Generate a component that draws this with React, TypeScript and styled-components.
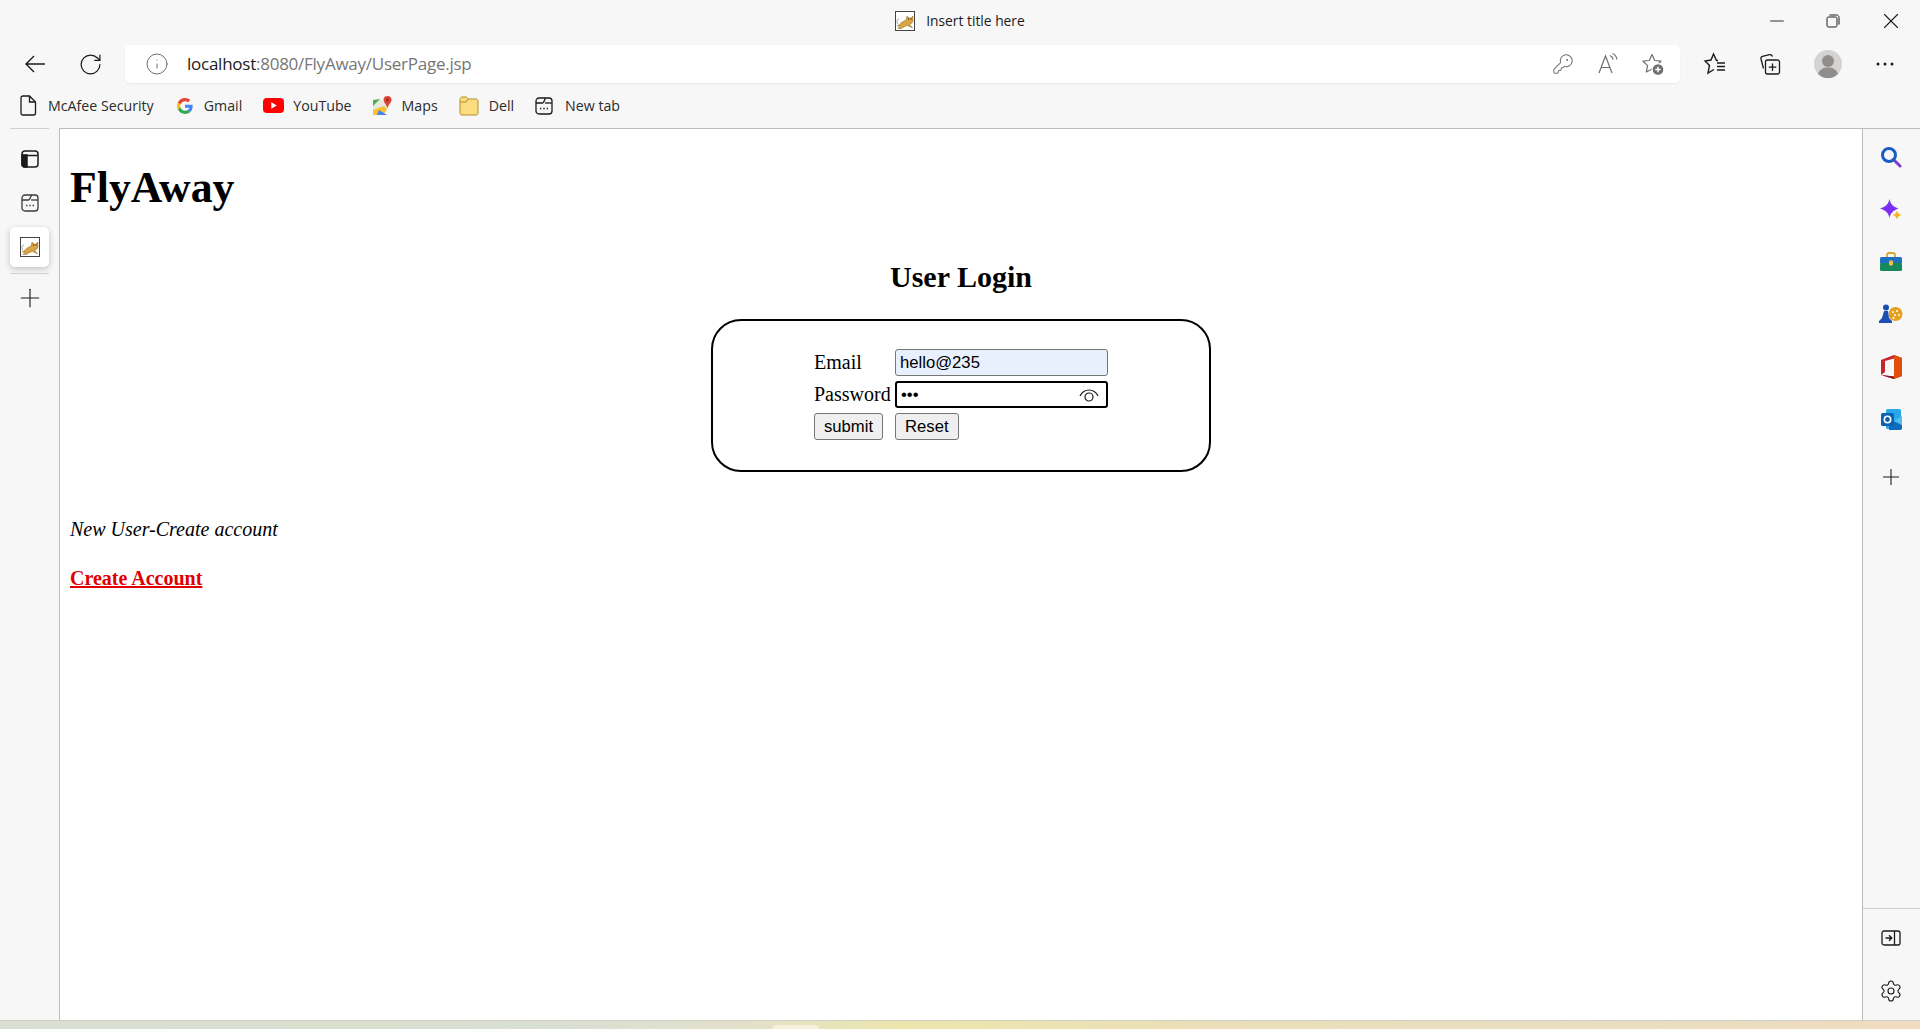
import styled, { createGlobalStyle } from "styled-components";
import { Info, KeyRound, Minus, Plus, RotateCw, Settings, X } from "lucide-react";

const GlobalStyle = createGlobalStyle`
	html, body {
		margin: 0;
		padding: 0;
		height: 100%;
		overflow: hidden;
	}
	#root {
		height: 100%;
	}
`;

const Screen = styled.div`
	display: flex;
	flex-direction: column;
	height: 1029px;
	background: #f7f7f7;
	font-family: "Open Sans", "Noto Sans", sans-serif;
	color: #1b1b1b;
`;

const TitleBar = styled.div`
	display: grid;
	grid-template-columns: 1fr auto 1fr;
	align-items: center;
	height: 41px;
	flex: none;
`;
const TabTitle = styled.div`
	grid-column: 2;
	display: flex;
	align-items: center;
	gap: 11px;
	font-size: 13.8px;
	line-height: 19px;
`;
const WindowButtons = styled.div`
	grid-column: 3;
	display: flex;
	justify-content: flex-end;
`;
const WindowButton = styled.div<{ $w: number }>`
	display: flex;
	align-items: center;
	justify-content: center;
	width: ${(p) => p.$w}px;
	height: 40px;
`;

const Toolbar = styled.div`
	display: flex;
	align-items: center;
	height: 38px;
	margin-top: 4px;
	padding: 0 9px 0 14px;
	flex: none;
`;
const ToolButton = styled.div<{ $w: number }>`
	display: flex;
	align-items: center;
	justify-content: center;
	flex: none;
	width: ${(p) => p.$w}px;
	height: 38px;
`;
const AddressBar = styled.div`
	display: flex;
	align-items: center;
	flex: 1;
	height: 38px;
	margin: 0 7px 0 14px;
	padding: 0 5px 0 20px;
	background: #fff;
	border-radius: 5px;
	box-shadow: 0 1px 2px rgba(0, 0, 0, 0.06);
`;
const Url = styled.div`
	flex: 1;
	margin: 0 0 2px 18px;
	font-size: 17px;
	letter-spacing: -0.25px;
	color: #767676;
	span {
		color: #1b1b1b;
	}
`;

const Bookmarks = styled.div`
	display: flex;
	align-items: center;
	height: 45px;
	padding-left: 20px;
	flex: none;
`;
const Bookmark = styled.div<{ $lead: number; $gap: number }>`
	display: flex;
	align-items: center;
	gap: ${(p) => p.$gap}px;
	margin-left: ${(p) => p.$lead}px;
	font-size: 14.2px;
	color: #2b2b2b;
`;

const Main = styled.div`
	display: flex;
	flex: 1;
	min-height: 0;
`;
const LeftRail = styled.div`
	display: flex;
	flex-direction: column;
	gap: 4px;
	width: 39px;
	margin: 0 10px;
	padding-top: 10px;
	border-top: 1px solid #d0d0d0;
	flex: none;
`;
const RailTab = styled.div<{ $active?: boolean }>`
	display: flex;
	align-items: center;
	justify-content: center;
	height: 40px;
	border-radius: 5px;
	background: ${(p) => (p.$active ? "#fff" : "transparent")};
	box-shadow: ${(p) => (p.$active ? "0 2px 6px rgba(0, 0, 0, 0.22)" : "none")};
`;
const RailDivider = styled.div`
	height: 1px;
	margin-top: 2px;
	background: #d0d0d0;
`;

const Page = styled.div`
	flex: 1;
	padding: 0 10px;
	background: #fff;
	border-top: 1px solid #bdbdbd;
	border-left: 1px solid #bdbdbd;
	font-family: "Liberation Serif", "Times New Roman", serif;
	color: #000;
`;
const Brand = styled.h1`
	margin: 29px 0 0;
	font-size: 43.75px;
	line-height: 58px;
	font-weight: bold;
`;
const Heading = styled.h2`
	margin: 43px 0 0;
	font-size: 30px;
	line-height: 36px;
	font-weight: bold;
	text-align: center;
`;
const LoginBox = styled.form`
	display: grid;
	grid-template-columns: 81px 213px;
	grid-auto-rows: 27px;
	row-gap: 5px;
	align-items: center;
	box-sizing: border-box;
	width: 500px;
	height: 153px;
	margin: 24px auto 0;
	padding: 28px 0 0 101px;
	border: 2px solid #000;
	border-radius: 30px;
	font-size: 20px;
`;
const FieldWrap = styled.div`
	position: relative;
	height: 27px;
`;
const TextInput = styled.input<{ $focused?: boolean }>`
	box-sizing: border-box;
	display: block;
	width: 213px;
	height: 27px;
	padding: 0 4px;
	font-family: "Liberation Sans", Arial, sans-serif;
	font-size: 16.67px;
	color: #000;
	outline: none;
	border-radius: 3px;
	border: ${(p) => (p.$focused ? "2px solid #000" : "1px solid #767676")};
	background: ${(p) => (p.$focused ? "#fff" : "#e8f0fe")};
`;
const EyeIcon = styled.svg`
	position: absolute;
	right: 9px;
	top: 6px;
`;
const ButtonRow = styled.div`
	grid-column: 1 / span 2;
	display: flex;
	gap: 12px;
`;
const FormButton = styled.button`
	box-sizing: border-box;
	height: 27px;
	padding: 0 9px;
	font-family: "Liberation Sans", Arial, sans-serif;
	font-size: 16.67px;
	color: #000;
	background: #efefef;
	border: 1px solid #767676;
	border-radius: 3px;
`;
const Note = styled.p`
	margin: 45px 0 0;
	font-size: 20px;
	line-height: 24px;
	font-style: italic;
`;
const CreateLink = styled.a`
	display: block;
	margin-top: 25px;
	font-size: 20px;
	line-height: 24px;
	font-weight: bold;
	color: #e00000;
	text-decoration: underline;
`;

const RightRail = styled.div`
	display: flex;
	flex-direction: column;
	width: 57px;
	padding-top: 2px;
	border-top: 1px solid #bdbdbd;
	border-left: 1px solid #bdbdbd;
	flex: none;
`;
const RailButton = styled.div`
	display: flex;
	align-items: center;
	justify-content: center;
	height: 52.4px;
	padding-right: 1px;
	flex: none;
`;
const RailAddButton = styled(RailButton)`
	margin-top: 5px;
`;
const RailFooter = styled.div`
	display: flex;
	flex-direction: column;
	margin-top: auto;
	padding: 3px 0;
	border-top: 1px solid #cfcfcf;
`;
const Wallpaper = styled.div`
	position: relative;
	height: 9px;
	flex: none;
	background: linear-gradient(90deg, #d9dfd2 0%, #d8dfcf 20%, #d9dfd4 28%, #e2e0cc 38%, #ece6ac 47%, #ecdfb8 62%, #e8dfc0 78%, #f0dcc0 100%);
	box-shadow: inset 0 1px 0 #cfd0c2;
`;
const TaskbarPill = styled.div`
	position: absolute;
	left: 772px;
	bottom: 0;
	width: 47px;
	height: 4px;
	background: #f5f0dc;
	border-radius: 4px 4px 0 0;
`;

function TomcatIcon({ size }: { size: number }) {
	return (
		<svg width={size} height={size} viewBox="0 0 20 20">
			<rect x="0.5" y="0.5" width="19" height="19" fill="#fff" stroke="#444" />
			<path d="M2 15c3-1 4-4 7-5l2-1 1-4 2 2h2l2-2v5c-.5 2-2 3-3.500 3l3 4-5-2.500-3 1-3 2H3l2-3z" fill="#d9a441" stroke="#8a6a2a" strokeWidth=".5" />
			<path d="M3 13C1 11 2 8 4 8" fill="none" stroke="#888" strokeWidth=".8" />
			<circle cx="13.500" cy="8" r=".7" fill="#5a3d10" />
			<circle cx="16" cy="8" r=".7" fill="#5a3d10" />
		</svg>
	);
}

function BackIcon() {
	return (
		<svg width="22" height="20" viewBox="0 0 22 20" fill="none" stroke="#1b1b1b" strokeWidth="1.4">
			<path d="M21 10H2M10 2l-8 8 8 8" />
		</svg>
	);
}

function StarPlusIcon() {
	return (
		<svg width="24" height="24" viewBox="0 0 24 24" fill="none">
			<path d="M11 2.500l2.700 6 6.300.7-4.600 4.400 1.300 6.300L11 17l-5.700 3 1.300-6.400L2 9.200l6.300-.7z" stroke="#6f6f6f" strokeWidth="1.200" strokeLinejoin="round" />
			<circle cx="17" cy="17.500" r="6.500" fill="#fff" />
			<circle cx="17" cy="17.500" r="5.300" fill="#6f6f6f" />
			<path d="M17 14.800v5.400M14.300 17.500h5.400" stroke="#fff" strokeWidth="1.500" />
		</svg>
	);
}

function ReadAloudIcon() {
	return (
		<svg width="24" height="24" viewBox="0 0 24 24" fill="none" stroke="#6f6f6f" strokeWidth="1.200">
			<path d="M3 21L9.500 4 16 21M5 15.500h9" />
			<path d="M14 3.500c1.800.8 2.800 2.200 3.200 4M16.500 1.500c2.500 1 4 3.300 4.500 6" />
		</svg>
	);
}

function FavoritesIcon() {
	return (
		<svg width="24" height="24" viewBox="0 0 24 24" fill="none" stroke="#1b1b1b" strokeWidth="1.400">
			<path d="M15 8.500h-1.500L10.500 2 8 8 2 9l4.500 4.500L5 21l6-3.500" />
			<path d="M14 11h8M14 14.500h8M14 18h8" />
		</svg>
	);
}

function CollectionsIcon() {
	return (
		<svg width="24" height="24" viewBox="0 0 24 24" fill="none" stroke="#1b1b1b" strokeWidth="1.300">
			<rect x="7.500" y="8" width="14" height="14" rx="2" />
			<path d="M14.500 11.500v7.500M10.800 15.200h7.500" />
			<path d="M5.500 16.500L3 7c-.3-1.300.3-2.400 1.500-2.700l7-1.700c1.500-.3 2.400.3 3 1.900" />
		</svg>
	);
}

function RestoreIcon() {
	return (
		<svg width="14" height="14" viewBox="0 0 14 14" fill="none" stroke="#1b1b1b" strokeWidth="1">
			<rect x="1" y="3" width="10" height="10" rx="1.500" />
			<path d="M3.500 1h7c1.500 0 2.500 1 2.500 2.500v7" />
		</svg>
	);
}

function Avatar() {
	return (
		<svg width="28" height="28" viewBox="0 0 28 28">
			<circle cx="14" cy="14" r="14" fill="#d4d3d1" />
			<circle cx="14" cy="11" r="6" fill="#8f8e8c" />
			<path d="M4 24c2-5 5-6.500 10-6.500S22 19 24 24a14 14 0 0 1-20 0z" fill="#8f8e8c" />
		</svg>
	);
}

function MoreIcon() {
	return (
		<svg width="18" height="4" viewBox="0 0 18 4" fill="#1b1b1b">
			<circle cx="2" cy="2" r="1.500" />
			<circle cx="9" cy="2" r="1.500" />
			<circle cx="16" cy="2" r="1.500" />
		</svg>
	);
}

function PageIcon() {
	return (
		<svg width="17" height="21" viewBox="0 0 17 21" fill="none" stroke="#1b1b1b" strokeWidth="1.300">
			<path d="M3 1h6.500L15.500 7v11c0 1.200-.8 2-2 2H3c-1.200 0-2-.8-2-2V3c0-1.200.8-2 2-2zM9.500 1v6h6" />
		</svg>
	);
}

function GoogleIcon() {
	return (
		<svg width="16" height="16" viewBox="0 0 48 48">
			<path fill="#EA4335" d="M24 9.500c3.500 0 6.700 1.300 9.200 3.400l6.800-6.800C35.900 2.400 30.300 0 24 0 14.600 0 6.500 5.400 2.600 13.200l7.900 6.100C12.400 13.700 17.700 9.500 24 9.500z" />
			<path fill="#4285F4" d="M47 24.500c0-1.600-.1-3.100-.4-4.500H24v9h12.900c-.6 3-2.200 5.400-4.700 7.100l7.700 6c4.500-4.200 7.100-10.300 7.100-17.600z" />
			<path fill="#FBBC05" d="M10.500 28.700c-.5-1.500-.8-3-.8-4.700s.3-3.200.8-4.700l-7.900-6.100C1 16.400 0 20.100 0 24s1 7.600 2.600 10.800z" />
			<path fill="#34A853" d="M24 48c6.500 0 11.900-2.100 15.900-5.900l-7.700-6c-2.200 1.400-4.900 2.300-8.200 2.300-6.300 0-11.600-4.200-13.500-9.800l-7.900 6.100C6.500 42.600 14.600 48 24 48z" />
		</svg>
	);
}

function YouTubeIcon() {
	return (
		<svg width="21" height="15" viewBox="0 0 21 15">
			<rect width="21" height="15" rx="4" fill="#f00" />
			<path d="M8.300 4.200l5.500 3.300-5.500 3.300z" fill="#fff" />
		</svg>
	);
}

function MapsIcon() {
	return (
		<svg width="20" height="20" viewBox="0 0 20 20">
			<path d="M1 4l7-1 9 8-5 8H2c-.6 0-1-.4-1-1z" fill="#e8e8e0" />
			<path d="M1 4l7-1-7 7z" fill="#4fae5c" />
			<path d="M1 14l11-4 3 3-4 6H2c-.6 0-1-.4-1-1z" fill="#fbc02d" />
			<path d="M7 14l8 5H5z" fill="#4285f4" />
			<path d="M15.500 0a4 4 0 0 1 4 4c0 2.500-2.500 4-4 8-1.500-4-4-5.500-4-8a4 4 0 0 1 4-4z" fill="#d9483b" />
			<circle cx="15.500" cy="4" r="1.400" fill="#a52714" />
		</svg>
	);
}

function FolderIcon() {
	return (
		<svg width="20" height="20" viewBox="0 0 20 20">
			<path d="M1 3.500C1 2 2 1 3 1h4c1 0 1.500 1 2.500 2H17c1.200 0 2 .8 2 2v12c0 1.200-.8 2-2 2H3c-1.200 0-2-.8-2-2z" fill="#fbdc7e" stroke="#b68d2c" />
			<path d="M1 6h6l2-3" fill="none" stroke="#b68d2c" />
		</svg>
	);
}

function NewTabIcon({ color, size }: { color: string; size: number }) {
	return (
		<svg width={size} height={size} viewBox="0 0 18 18" fill="none" stroke={color} strokeWidth="1.300">
			<rect x="1" y="1" width="16" height="16" rx="3" />
			<path d="M1 6h6.500c.8 0 1-.8 1.500-1.500L10.500 1" />
			<path d="M10 6h7" />
			<path d="M5 11.500h1.400M8.300 11.500h1.400M11.600 11.500H13" strokeWidth="1.600" />
		</svg>
	);
}

function WorkspacesIcon() {
	return (
		<svg width="18" height="18" viewBox="0 0 18 18" fill="none" stroke="#1b1b1b" strokeWidth="1.500">
			<rect x="1" y="1" width="16" height="16" rx="3" />
			<path d="M1 5.500h16" />
			<path d="M1 5h5v12H4c-2 0-3-1-3-3z" fill="#1b1b1b" />
		</svg>
	);
}

function SearchColorIcon() {
	return (
		<svg width="22" height="22" viewBox="0 0 22 22" fill="none">
			<path d="M13.500 13.500L20 20" stroke="#7b3fd0" strokeWidth="3" strokeLinecap="round" />
			<circle cx="9" cy="9" r="6.500" stroke="#1b5cc4" strokeWidth="3" />
		</svg>
	);
}

function SparkleIcon() {
	return (
		<svg width="22" height="22" viewBox="0 0 22 22">
			<path d="M9.500 0c1 5 3.500 7.500 9 9.500-5.500 2-8 4.500-9 9.500-1-5-3.500-7.500-9.500-9.500C6 7.500 8.500 5 9.500 0z" fill="#7b2ff2" />
			<path d="M17 11.500c.5 2 1.500 3.500 4.500 4.500-3 1-4 2-4.500 4.500-.5-2.500-1.500-3.500-4.500-4.500 3-1 4-2.500 4.500-4.500z" fill="#f5b324" />
		</svg>
	);
}

function ToolboxIcon() {
	return (
		<svg width="22" height="20" viewBox="0 0 22 20">
			<path d="M7 5V3c0-1 .8-2 2-2h4c1.200 0 2 1 2 2v2" fill="none" stroke="#d9a52c" strokeWidth="1.800" />
			<rect y="5" width="22" height="7" rx="1.500" fill="#1d6fc0" />
			<rect y="11" width="22" height="8" rx="1.500" fill="#17885e" />
			<rect x="9" y="8.500" width="4" height="5" rx="1" fill="#f0c040" />
		</svg>
	);
}

function GamesIcon() {
	return (
		<svg width="24" height="20" viewBox="0 0 24 20">
			<circle cx="16.500" cy="10" r="7" fill="#e5a11e" />
			<g fill="#fff">
				<circle cx="14" cy="8" r="1" />
				<circle cx="18" cy="7" r="1" />
				<circle cx="16" cy="11" r="1" />
				<circle cx="20" cy="11" r="1" />
				<circle cx="14.500" cy="14" r="1" />
			</g>
			<circle cx="7" cy="3.500" r="3" fill="#1b4fb4" />
			<path d="M5 7h4l1 7 3 3v2H0v-2l3-3z" fill="#1b4fb4" />
		</svg>
	);
}

function OfficeIcon() {
	return (
		<svg width="21" height="24" viewBox="0 0 21 24">
			<path d="M13 0l8 3v18l-8 3-13-4 13 1.500V3.500L4 6v11l-4 3V5z" fill="#c4262e" />
			<path d="M13 0l8 3v18l-8 3z" fill="#e0500c" />
			<path d="M13 21.500V24L0 20z" fill="#8f1a2b" />
		</svg>
	);
}

function OutlookIcon() {
	return (
		<svg width="21" height="21" viewBox="0 0 21 21">
			<rect x="5" y="0" width="15" height="20" rx="1.500" fill="#28a8ea" />
			<path d="M8 10l13 6v3c0 1-.6 2-2 2H8z" fill="#0f6cbd" />
			<path d="M21 7v9l-8-4z" fill="#50bff0" />
			<rect y="4" width="13" height="13" rx="1.500" fill="#0b62b4" />
			<circle cx="6.500" cy="10.500" r="3.200" fill="none" stroke="#fff" strokeWidth="1.600" />
		</svg>
	);
}

function PanelIcon() {
	return (
		<svg width="20" height="16" viewBox="0 0 20 16" fill="none" stroke="#1b1b1b" strokeWidth="1.300">
			<rect x="1" y="1" width="18" height="14" rx="2" />
			<path d="M13.500 1v14M4.500 8h6M8 5.200L10.800 8 8 10.800" />
		</svg>
	);
}

const bookmarks = [
	{ name: "McAfee Security", icon: <PageIcon />, lead: 0, gap: 11 },
	{ name: "Gmail", icon: <GoogleIcon />, lead: 23, gap: 11 },
	{ name: "YouTube", icon: <YouTubeIcon />, lead: 21, gap: 9 },
	{ name: "Maps", icon: <MapsIcon />, lead: 20, gap: 10 },
	{ name: "Dell", icon: <FolderIcon />, lead: 21, gap: 10 },
	{ name: "New tab", icon: <NewTabIcon color="#1b1b1b" size={18} />, lead: 21, gap: 12 },
];

const railApps = [
	<SearchColorIcon />,
	<SparkleIcon />,
	<ToolboxIcon />,
	<GamesIcon />,
	<OfficeIcon />,
	<OutlookIcon />,
];

export default function App() {
	return (
		<Screen>
			<GlobalStyle />
			<TitleBar>
				<TabTitle>
					<TomcatIcon size={20} />
					Insert title here
				</TabTitle>
				<WindowButtons>
					<WindowButton $w={56}><Minus size={22} strokeWidth={1} /></WindowButton>
					<WindowButton $w={56}><RestoreIcon /></WindowButton>
					<WindowButton $w={59}><X size={26} strokeWidth={1} /></WindowButton>
				</WindowButtons>
			</TitleBar>
			<Toolbar>
				<ToolButton $w={42}><BackIcon /></ToolButton>
				<ToolButton $w={13} />
				<ToolButton $w={42}><RotateCw size={25} strokeWidth={1.2} /></ToolButton>
				<AddressBar>
					<Info size={24} strokeWidth={1} color="#6f6f6f" />
					<Url><span>localhost</span>:8080/FlyAway/UserPage.jsp</Url>
					<ToolButton $w={45}><KeyRound size={22} strokeWidth={1.1} color="#6f6f6f" /></ToolButton>
					<ToolButton $w={45}><ReadAloudIcon /></ToolButton>
					<ToolButton $w={45}><StarPlusIcon /></ToolButton>
				</AddressBar>
				<ToolButton $w={56}><FavoritesIcon /></ToolButton>
				<ToolButton $w={54}><CollectionsIcon /></ToolButton>
				<ToolButton $w={62}><Avatar /></ToolButton>
				<ToolButton $w={52}><MoreIcon /></ToolButton>
			</Toolbar>
			<Bookmarks>
				{bookmarks.map((b) => (
					<Bookmark key={b.name} $lead={b.lead} $gap={b.gap}>
						{b.icon}
						{b.name}
					</Bookmark>
				))}
			</Bookmarks>
			<Main>
				<LeftRail>
					<RailTab><WorkspacesIcon /></RailTab>
					<RailTab><NewTabIcon color="#3a3a3a" size={18} /></RailTab>
					<RailTab $active><TomcatIcon size={20} /></RailTab>
					<RailDivider />
					<RailTab><Plus size={30} strokeWidth={0.9} /></RailTab>
				</LeftRail>
				<Page>
					<Brand>FlyAway</Brand>
					<Heading>User Login</Heading>
					<LoginBox onSubmit={(e) => e.preventDefault()}>
						<label htmlFor="email">Email</label>
						<TextInput id="email" type="text" defaultValue="hello@235" readOnly />
						<label htmlFor="password">Password</label>
						<FieldWrap>
							<TextInput id="password" type="password" defaultValue="abc" readOnly $focused />
							<EyeIcon width="20" height="16" viewBox="0 0 20 16" fill="none" stroke="#1b1b1b" strokeWidth="1.200">
								<path d="M1 9c2-4 5-6 9-6s7 2 9 6" />
								<circle cx="10" cy="10" r="4" />
							</EyeIcon>
						</FieldWrap>
						<ButtonRow>
							<FormButton type="submit">submit</FormButton>
							<FormButton type="reset">Reset</FormButton>
						</ButtonRow>
					</LoginBox>
					<Note>New User-Create account</Note>
					<CreateLink href="#">Create Account</CreateLink>
				</Page>
				<RightRail>
					{railApps.map((icon, i) => (
						<RailButton key={i}>{icon}</RailButton>
					))}
					<RailAddButton><Plus size={26} strokeWidth={1} /></RailAddButton>
					<RailFooter>
						<RailButton><PanelIcon /></RailButton>
						<RailButton><Settings size={24} strokeWidth={1.1} /></RailButton>
					</RailFooter>
				</RightRail>
			</Main>
			<Wallpaper>
				<TaskbarPill />
			</Wallpaper>
		</Screen>
	);
}
